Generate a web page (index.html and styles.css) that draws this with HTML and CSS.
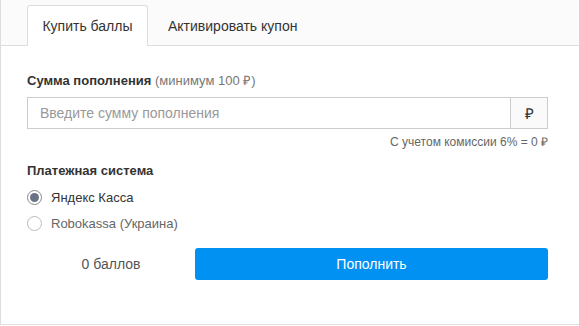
FILE: index.html
```html
<!DOCTYPE html>
<html lang="ru">
<head>
    <meta charset="UTF-8">
    <meta name="viewport" content="width=device-width, initial-scale=1.0">
    <title>Пополнение баланса</title>
    <link rel="stylesheet" href="styles.css">
</head>
<body>
    <div class="panel">
        <div class="tabs">
            <div class="tab active">Купить баллы</div>
            <div class="tab">Активировать купон</div>
        </div>

        <form class="pay-form">
            <label class="field-label" for="amount">Сумма пополнения <span class="hint">(минимум 100 ₽)</span></label>
            <div class="input-group">
                <input type="text" id="amount" placeholder="Введите сумму пополнения">
                <span class="addon">₽</span>
            </div>
            <div class="commission">С учетом комиссии 6% = 0 ₽</div>

            <div class="field-label system">Платежная система</div>
            <div class="radio-list">
                <label class="radio">
                    <input type="radio" name="system" checked>
                    <span>Яндекс Касса</span>
                </label>
                <label class="radio muted">
                    <input type="radio" name="system">
                    <span>Robokassa (Украина)</span>
                </label>
            </div>

            <div class="form-footer">
                <div class="points">0 баллов</div>
                <button type="button" class="submit-btn">Пополнить</button>
            </div>
        </form>
    </div>
</body>
</html>
```

FILE: styles.css
```css
body {
    margin: 0;
    font-family: "Liberation Sans", Arial, sans-serif;
    color: #333;
    background: #fff;
}
.panel {
    height: 325px;
    border-left: 1px solid #ddd;
    border-bottom: 1px solid #ddd;
    box-sizing: border-box;
}
.tabs {
    display: flex;
    height: 46px;
    box-sizing: border-box;
    padding: 5px 0 0 26px;
    background-color: #fbfbfb;
    border-bottom: 1px solid #ddd;
}
.tab {
    height: 41px;
    box-sizing: border-box;
    padding: 0 19px;
    display: flex;
    align-items: center;
    font-size: 14px;
    color: #333;
    border: 1px solid transparent;
    border-bottom: none;
}
.tab.active {
    width: 121px;
    justify-content: center;
    padding: 0;
    background-color: #fff;
    border-color: #ddd;
    border-radius: 3px 3px 0 0;
}
.pay-form {
    padding: 27px 31px 0 26px;
}
.field-label {
    display: block;
    font-size: 13px;
    font-weight: bold;
    color: #333;
    line-height: 16px;
}
.hint {
    font-weight: normal;
    color: #777;
}
.input-group {
    display: flex;
    margin-top: 8px;
    height: 32px;
}
.input-group input {
    flex: 1;
    min-width: 0;
    border: 1px solid #ccc;
    border-right: none;
    padding: 0 12px;
    font-family: inherit;
    font-size: 14px;
    color: #333;
    outline: none;
}
.input-group input::placeholder {
    color: #999;
}
.addon {
    width: 36px;
    display: flex;
    align-items: center;
    justify-content: center;
    border: 1px solid #ccc;
    background-color: #fafafa;
    font-size: 15px;
    color: #333;
}
.commission {
    text-align: right;
    font-size: 12px;
    color: #666;
    margin-top: 6px;
    line-height: 14px;
}
.system {
    margin-top: 14px;
}
.radio-list {
    margin-top: 5px;
}
.radio {
    display: flex;
    align-items: center;
    font-size: 13px;
    color: #333;
    height: 26px;
}
.radio.muted {
    color: #666;
}
.radio input {
    appearance: none;
    -webkit-appearance: none;
    width: 15px;
    height: 15px;
    margin: 0 9px 0 0;
    border: 1px solid #bbb;
    border-radius: 50%;
    background: #fff;
    display: flex;
    align-items: center;
    justify-content: center;
}
.radio input:checked {
    border-color: #888;
}
.radio input:checked::after {
    content: "";
    width: 9px;
    height: 9px;
    border-radius: 50%;
    background-color: #6a7385;
}
.form-footer {
    display: flex;
    align-items: center;
    margin-top: 12px;
}
.points {
    width: 168px;
    text-align: center;
    font-size: 14px;
    color: #555;
}
.submit-btn {
    flex: 1;
    height: 32px;
    border: none;
    border-radius: 3px;
    background-color: #0091f3;
    color: #fff;
    font-family: inherit;
    font-size: 14px;
    cursor: pointer;
}
.submit-btn:hover {
    background-color: #0083dd;
}
```
